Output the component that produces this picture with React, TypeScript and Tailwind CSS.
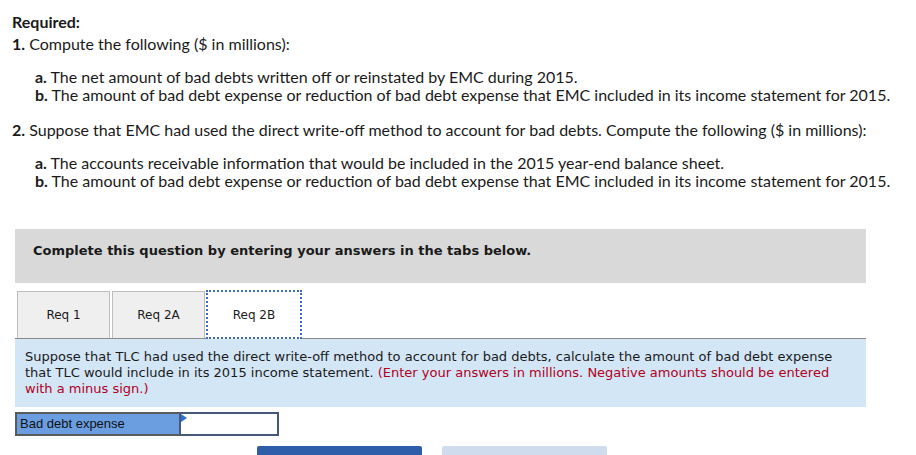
export default function App() {
  return (
    <div className="w-[916px] h-[455px] overflow-hidden bg-white text-[#1a1a1a]">
      <div className="pl-3 pt-[13px] text-[16px] leading-[18px] font-['Lato','Open_Sans',sans-serif]">
        <p className="font-bold">Required:</p>
        <p className="mt-1">
          <span className="font-bold">1.</span> Compute the following ($ in millions):
        </p>
        <div className="ml-[23px] mt-[15px]">
          <p>
            <span className="font-bold">a.</span> The net amount of bad debts written off or reinstated by EMC during 2015.
          </p>
          <p>
            <span className="font-bold">b.</span> The amount of bad debt expense or reduction of bad debt expense that EMC included in its income statement for 2015.
          </p>
        </div>
        <p className="mt-[17px]">
          <span className="font-bold">2.</span> Suppose that EMC had used the direct write-off method to account for bad debts. Compute the following ($ in millions):
        </p>
        <div className="ml-[23px] mt-[15px]">
          <p>
            <span className="font-bold">a.</span> The accounts receivable information that would be included in the 2015 year-end balance sheet.
          </p>
          <p>
            <span className="font-bold">b.</span> The amount of bad debt expense or reduction of bad debt expense that EMC included in its income statement for 2015.
          </p>
        </div>
      </div>

      <div className="ml-[15px] w-[851px] mt-[39px] font-['DejaVu_Sans','Verdana',sans-serif]">
        <div className="h-[54px] bg-[#d9d9d9] pl-[18px] pt-[9px]">
          <span className="font-bold text-[13px] leading-[16px]">Complete this question by entering your answers in the tabs below.</span>
        </div>

        <div className="mt-[6px] flex items-end pl-[2px] h-[49px]">
          <div className="w-[93px] h-[47px] bg-[#efefef] border border-b-0 border-[#bdbdbd] flex items-center justify-center text-[12px]">
            Req 1
          </div>
          <div className="ml-[2px] w-[93px] h-[47px] bg-[#efefef] border border-b-0 border-[#bdbdbd] flex items-center justify-center text-[12px]">
            Req 2A
          </div>
          <div className="ml-px w-[96px] h-[49px] bg-white border-2 border-dotted border-[#3b6bc4] -mb-px relative z-10 flex items-center justify-center text-[12px]">
            Req 2B
          </div>
        </div>

        <div className="border-t border-[#8a8a8a] bg-[#d3e6f6] h-[69px] pl-[10px] pr-4 pt-[10px] text-[13px] leading-[16px]">
          <p>
            Suppose that TLC had used the direct write-off method to account for bad debts, calculate the amount of bad debt expense that TLC would include in its 2015 income statement. <span className="text-[#b0001c]">(Enter your answers in millions. Negative amounts should be entered with a minus sign.)</span>
          </p>
        </div>

        <div className="mt-[5px] flex h-[24px]">
          <div className="w-[166px] bg-[#6a9ee0] border-2 border-[#5a5a5a] flex items-center pl-[3px] text-[13px] font-['Liberation_Sans','Arial',sans-serif] text-[#111]">
            Bad debt expense
          </div>
          <div className="relative w-[100px] -ml-[2px] bg-white border-2 border-[#46597a]">
            <div className="absolute left-0 top-0 w-0 h-0 border-t-[4px] border-b-[4px] border-l-[6px] border-t-transparent border-b-transparent border-l-[#2f6fd0]" />
          </div>
        </div>

        <div className="mt-[10px] flex">
          <div className="ml-[242px] w-[165px] h-[12px] bg-[#2e5ea9] rounded-t-[2px]" />
          <div className="ml-[20px] w-[165px] h-[12px] bg-[#cfdcee] rounded-t-[2px]" />
        </div>
      </div>
    </div>
  );
}
